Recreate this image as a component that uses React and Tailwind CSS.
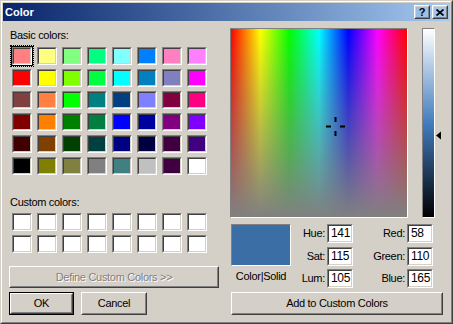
import React from 'react';

const basicColors = [
  ['bg-[#ff8080]', 'bg-[#ffff80]', 'bg-[#80ff80]', 'bg-[#00ff80]', 'bg-[#80ffff]', 'bg-[#0080ff]', 'bg-[#ff80c0]', 'bg-[#ff80ff]'],
  ['bg-[#ff0000]', 'bg-[#ffff00]', 'bg-[#80ff00]', 'bg-[#00ff40]', 'bg-[#00ffff]', 'bg-[#0080c0]', 'bg-[#8080c0]', 'bg-[#ff00ff]'],
  ['bg-[#804040]', 'bg-[#ff8040]', 'bg-[#00ff00]', 'bg-[#008080]', 'bg-[#004080]', 'bg-[#8080ff]', 'bg-[#800040]', 'bg-[#ff0080]'],
  ['bg-[#800000]', 'bg-[#ff8000]', 'bg-[#008000]', 'bg-[#008040]', 'bg-[#0000ff]', 'bg-[#0000a0]', 'bg-[#800080]', 'bg-[#8000ff]'],
  ['bg-[#400000]', 'bg-[#804000]', 'bg-[#004000]', 'bg-[#004040]', 'bg-[#000080]', 'bg-[#000040]', 'bg-[#400040]', 'bg-[#400080]'],
  ['bg-[#000000]', 'bg-[#808000]', 'bg-[#808040]', 'bg-[#808080]', 'bg-[#408080]', 'bg-[#c0c0c0]', 'bg-[#400040]', 'bg-[#ffffff]'],
];

const customColors = Array(2).fill(Array(8).fill('bg-white'));

// classic sunken 2px edge
function Sunken({ className = '', innerClass = '', children }) {
  return (
    <div className={`border border-t-[#808080] border-l-[#808080] border-b-white border-r-white ${className}`}>
      <div className={`h-full border border-t-[#404040] border-l-[#404040] border-b-[#d4d0c8] border-r-[#d4d0c8] ${innerClass}`}>
        {children}
      </div>
    </div>
  );
}

// classic raised button
function Button({ className = '', children, isDefault, disabled }) {
  const btn = (
    <div className={`h-full border border-t-white border-l-white border-b-[#404040] border-r-[#404040]`}>
      <div className="h-full flex items-center justify-center border border-t-[#d4d0c8] border-l-[#d4d0c8] border-b-[#808080] border-r-[#808080]">
        <span className={disabled ? 'text-[#808080] [text-shadow:1px_1px_0_#fff]' : ''}>{children}</span>
      </div>
    </div>
  );
  if (isDefault) {
    return <div className={`border border-black ${className}`}>{btn}</div>;
  }
  return <div className={className}>{btn}</div>;
}

function Swatch({ color, selected }) {
  return (
    <div className="relative w-[20px] h-[18px]">
      <Sunken className="h-full" innerClass={color} />
      {selected && (
        <>
          <div className="absolute -inset-[1px] border border-black" />
          <div className="absolute -inset-[2px] border border-dotted border-black" />
        </>
      )}
    </div>
  );
}

function Field({ value }) {
  return (
    <Sunken className="h-[19px]" innerClass="bg-white flex items-center pl-[2px] text-[12px]">
      {value}
    </Sunken>
  );
}

export default function App() {
  return (
    <div className="w-[453px] h-[324px] bg-[#d4d0c8] font-['Liberation_Sans',Arial,sans-serif] text-[11px] leading-[13px] tracking-[-0.3px] text-black border border-t-[#d4d0c8] border-l-[#d4d0c8] border-r-[#404040] border-b-[#404040]">
      <div className="h-full flex flex-col border border-t-white border-l-white border-r-[#808080] border-b-[#808080] p-[1px]">
        {/* Title bar */}
        <div className="h-[18px] flex items-center pl-[2px] pr-[2px] bg-linear-to-r from-[#0a246a] to-[#a6caf0]">
          <span className="font-bold text-white tracking-normal">Color</span>
          <div className="ml-auto flex gap-[2px]">
            <Button className="w-[16px] h-[14px]">
              <span className="font-bold text-[11px] leading-none">?</span>
            </Button>
            <Button className="w-[16px] h-[14px]">
              <svg width="8" height="7" viewBox="0 0 8 7">
                <path d="M0.5 0.5 L7.5 6.5 M7.5 0.5 L0.5 6.5" stroke="black" strokeWidth="1.7" />
              </svg>
            </Button>
          </div>
        </div>

        <div className="flex flex-1">
          {/* Left column */}
          <div className="w-[227px] pl-[6px] flex flex-col">
            <div className="mt-[8px] pl-[1px]">Basic colors:</div>
            <div className="mt-[5px] ml-[3px] flex flex-col gap-[4px]">
              {basicColors.map((row, r) => (
                <div key={r} className="flex gap-[5px]">
                  {row.map((c, i) => (
                    <Swatch key={i} color={c} selected={r === 0 && i === 0} />
                  ))}
                </div>
              ))}
            </div>
            <div className="mt-[21px] pl-[1px]">Custom colors:</div>
            <div className="mt-[4px] ml-[3px] flex flex-col gap-[4px]">
              {customColors.map((row, r) => (
                <div key={r} className="flex gap-[5px]">
                  {row.map((c, i) => (
                    <Swatch key={i} color={c} />
                  ))}
                </div>
              ))}
            </div>
            <Button className="mt-[13px] w-[210px] h-[22px]" disabled>
              Define Custom Colors &gt;&gt;
            </Button>
            <div className="mt-[4px] flex gap-[7px]">
              <Button className="w-[65px] h-[23px]" isDefault>OK</Button>
              <Button className="w-[66px] h-[23px]">Cancel</Button>
            </div>
          </div>

          {/* Right column */}
          <div className="flex flex-col">
            <div className="mt-[7px] flex items-start">
              <div className="w-[178px] h-[190px] border border-t-[#808080] border-l-[#808080] border-b-white border-r-white">
                <div className="relative h-full bg-[linear-gradient(to_right,#ff0000,#ffff00,#00ff00,#00ffff,#0000ff,#ff00ff,#ff0000)]">
                  <div className="absolute inset-0 bg-linear-to-b from-transparent to-[#808080]" />
                  <svg className="absolute inset-0" width="176" height="188">
                    <rect x="103.5" y="88" width="2" height="5" fill="black" />
                    <rect x="103.5" y="102" width="2" height="5" fill="black" />
                    <rect x="95" y="96.5" width="5" height="2" fill="black" />
                    <rect x="109" y="96.5" width="5" height="2" fill="black" />
                  </svg>
                </div>
              </div>
              <div className="relative ml-[14px] w-[13px] h-[190px] border border-t-[#808080] border-l-[#808080] border-b-white border-r-white">
                <div className="h-full bg-[linear-gradient(to_bottom,#ffffff,#427cbd_50%,#000000)]" />
                <svg className="absolute left-[13px] top-[102px]" width="6" height="9" viewBox="0 0 6 9">
                  <path d="M0 4.5 L5 0.5 L5 8.5 Z" fill="black" />
                </svg>
              </div>
            </div>

            <div className="mt-[6px] pl-[1px] grid grid-cols-[60px_36px_26px_54px_26px] grid-rows-[19px_19px_19px] gap-y-[3.5px]">
              <div className="row-span-2 border border-t-[#808080] border-l-[#808080] border-b-white border-r-white bg-[#3a6ea5]" />
              <div className="flex items-center justify-end pr-[2px]">Hue:</div>
              <Field value="141" />
              <div className="flex items-center justify-end pr-[2px]">Red:</div>
              <Field value="58" />
              <div className="flex items-center justify-end pr-[2px]">Sat:</div>
              <Field value="115" />
              <div className="flex items-center justify-end pr-[2px]">Green:</div>
              <Field value="110" />
              <div className="flex items-start justify-center pt-[1px]">Color|Solid</div>
              <div className="flex items-center justify-end pr-[2px]">Lum:</div>
              <Field value="105" />
              <div className="flex items-center justify-end pr-[2px]">Blue:</div>
              <Field value="165" />
            </div>

            <Button className="mt-[4px] ml-[1px] w-[212px] h-[23px]">Add to Custom Colors</Button>
          </div>
        </div>
      </div>
    </div>
  );
}
